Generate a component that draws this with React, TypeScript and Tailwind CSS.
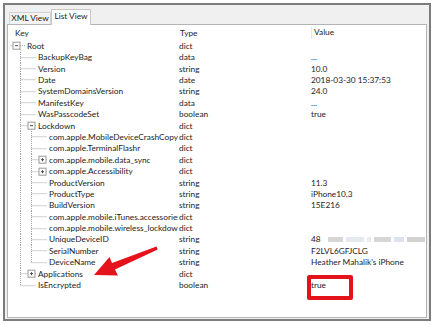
import React from 'react';

// ===== Tree Data =====
type Row = {
    key: string;
    type: string;
    value?: string;
    level: number;
    box?: 'plus' | 'minus';
    blur?: boolean;
};

const ROWS: Row[] = [
    { key: 'Root', type: 'dict', level: 0, box: 'minus' },
    { key: 'BackupKeyBag', type: 'data', value: '...', level: 1 },
    { key: 'Version', type: 'string', value: '10.0', level: 1 },
    { key: 'Date', type: 'date', value: '2018-03-30 15:37:53', level: 1 },
    { key: 'SystemDomainsVersion', type: 'string', value: '24.0', level: 1 },
    { key: 'ManifestKey', type: 'data', value: '...', level: 1 },
    { key: 'WasPasscodeSet', type: 'boolean', value: 'true', level: 1 },
    { key: 'Lockdown', type: 'dict', level: 1, box: 'minus' },
    { key: 'com.apple.MobileDeviceCrashCopy', type: 'dict', level: 2 },
    { key: 'com.apple.TerminalFlashr', type: 'dict', level: 2 },
    { key: 'com.apple.mobile.data_sync', type: 'dict', level: 2, box: 'plus' },
    { key: 'com.apple.Accessibility', type: 'dict', level: 2, box: 'plus' },
    { key: 'ProductVersion', type: 'string', value: '11.3', level: 2 },
    { key: 'ProductType', type: 'string', value: 'iPhone10,3', level: 2 },
    { key: 'BuildVersion', type: 'string', value: '15E216', level: 2 },
    { key: 'com.apple.mobile.iTunes.accessories', type: 'dict', level: 2 },
    { key: 'com.apple.mobile.wireless_lockdown', type: 'dict', level: 2 },
    { key: 'UniqueDeviceID', type: 'string', value: '48', level: 2, blur: true },
    { key: 'SerialNumber', type: 'string', value: 'F2LVL6GFJCLG', level: 2 },
    { key: 'DeviceName', type: 'string', value: "Heather Mahalik's iPhone", level: 2 },
    { key: 'Applications', type: 'dict', level: 1, box: 'plus' },
    { key: 'IsEncrypted', type: 'boolean', value: 'true', level: 1 },
];

const ROW_H = 11.4;
const LINE = '#a3a3a3';
const ORIGIN = 8; // page x of the panel content

// vertical guide x (page coords) for children of each level
const vx = (level: number) => 9 + 11 * level;
const textX = (level: number) => 27 + 11 * level;
const boxX = (level: number) => (level === 0 ? 16 : vx(level + 1));

function Gutter({ row, index }: { row: Row; index: number }) {
    const w = textX(row.level) - ORIGIN - 1;
    const mid = ROW_H / 2;
    const px = (x: number) => x - ORIGIN + 0.5;
    const parts: React.ReactNode[] = [];

    // level-1 guide: Root (bottom half) .. IsEncrypted (top half)
    if (index >= 1 && index <= 20) parts.push(<line key="v1" x1={px(vx(1))} y1={0} x2={px(vx(1))} y2={ROW_H} />);
    if (index === 21) parts.push(<line key="v1" x1={px(vx(1))} y1={0} x2={px(vx(1))} y2={mid} />);
    // level-2 guide: Lockdown children
    if (index >= 8 && index <= 18) parts.push(<line key="v2" x1={px(vx(2))} y1={0} x2={px(vx(2))} y2={ROW_H} />);
    if (index === 19) parts.push(<line key="v2" x1={px(vx(2))} y1={0} x2={px(vx(2))} y2={mid} />);

    const t = textX(row.level);
    const startX = row.level === 0 ? 10 : vx(row.level);
    let box: React.ReactNode = null;
    if (row.box) {
        const cx = boxX(row.level);
        const bl = cx - 3.5;
        const br = cx + 3.5;
        parts.push(<line key="h1" x1={px(startX)} y1={mid} x2={px(bl)} y2={mid} />);
        parts.push(<line key="h2" x1={px(br)} y1={mid} x2={px(t - 2)} y2={mid} />);
        if (row.box === 'minus') {
            parts.push(<line key="vb" x1={px(vx(row.level + 1))} y1={mid + 3.5} x2={px(vx(row.level + 1))} y2={ROW_H} />);
        }
        box = (
            <g>
                <rect x={px(bl)} y={mid - 3.5} width={7} height={7} fill="#fff" stroke="#9a9a9a" strokeWidth={1} />
                <line x1={px(bl) + 2} y1={mid} x2={px(br) - 2} y2={mid} stroke="#4a4a4a" strokeWidth={1} />
                {row.box === 'plus' && (
                    <line x1={px(cx)} y1={mid - 1.5} x2={px(cx)} y2={mid + 1.5} stroke="#4a4a4a" strokeWidth={1} />
                )}
            </g>
        );
    } else {
        parts.push(<line key="h" x1={px(startX)} y1={mid} x2={px(t - 2)} y2={mid} />);
    }

    return (
        <svg width={w} height={ROW_H} className="shrink-0 block">
            <g stroke={LINE} strokeWidth={1} strokeDasharray="1 1">{parts}</g>
            {box}
        </svg>
    );
}

function BlurredId() {
    return (
        <div className="flex items-center gap-[3px] ml-[7px] h-[5px]">
            <div className="w-[15px] h-full bg-[#d6d6d6]" />
            <div className="w-[18px] h-full bg-[#e4e8ef]" />
            <div className="w-[4px] h-full bg-[#ebebeb]" />
            <div className="w-[17px] h-full bg-[#d6d6d6]" />
            <div className="w-[10px] h-full bg-[#dde3ec]" />
            <div className="w-[18px] h-full bg-[#d2d2d2]" />
        </div>
    );
}

export default function App() {
    return (
        <div
            className="relative w-[436px] h-[325px] bg-white overflow-hidden text-[#1c1c1c]"
            style={{ fontFamily: '"Segoe UI", Lato, "Liberation Sans", sans-serif' }}
        >
            <div className="ml-[3px] mt-[3px] w-[428px] h-[318px] border-2 border-[#7c7c7c] bg-[#f0f0f0] px-[2px] pb-[1px] flex flex-col">
                {/* Tabs */}
                <div className="h-[19px] flex items-end pl-[2px] text-[8.3px] whitespace-nowrap">
                    <div className="h-[12px] justify-center flex items-center border border-b-0 border-[#d2d2d2] bg-[#f3f3f3] w-[42px]">
                        XML View
                    </div>
                    <div className="h-[16px] justify-center pb-[3px] flex items-center border border-b-0 border-[#c6c6c6] bg-white w-[40px] -mb-px relative">
                        List View
                    </div>
                </div>

                {/* List */}
                <div className="flex-1 bg-white border border-[#b4b4b4] text-[8.3px] leading-none">
                    <div className="h-[15.3px] flex items-center">
                        <div className="w-[170px] pl-[7px]">Key</div>
                        <div className="w-[133px] pl-[2px]">Type</div>
                        <div className="h-[12px] border-l border-[#e6e6e6] pl-[2px] flex items-center">Value</div>
                    </div>

                    {ROWS.map((row, i) => (
                        <div key={row.key} className="h-[11.4px] flex items-center whitespace-nowrap">
                            <div className="w-[170px] flex items-center overflow-hidden">
                                <Gutter row={row} index={i} />
                                <span className="pl-[1px]">{row.key}</span>
                            </div>
                            <div className="w-[133px] pl-px">{row.type}</div>
                            <div className="flex items-center">
                                <span>{row.value}</span>
                                {row.blur && <BlurredId />}
                            </div>
                        </div>
                    ))}
                </div>
            </div>

            {/* Annotation: box around IsEncrypted value */}
            <div className="absolute left-[307px] top-[275px] w-[46px] h-[25px] border-[4px] border-[#e3121b] rounded-[2px]" />

            {/* Annotation: arrow pointing at Applications */}
            <svg className="absolute left-0 top-0" width={436} height={325}>
                <polygon
                    points="94,275 109.5,257 112,263 156.5,246.6 157.7,249.4 115,269.6 118,275.5"
                    fill="#e5141c"
                />
            </svg>
        </div>
    );
}
